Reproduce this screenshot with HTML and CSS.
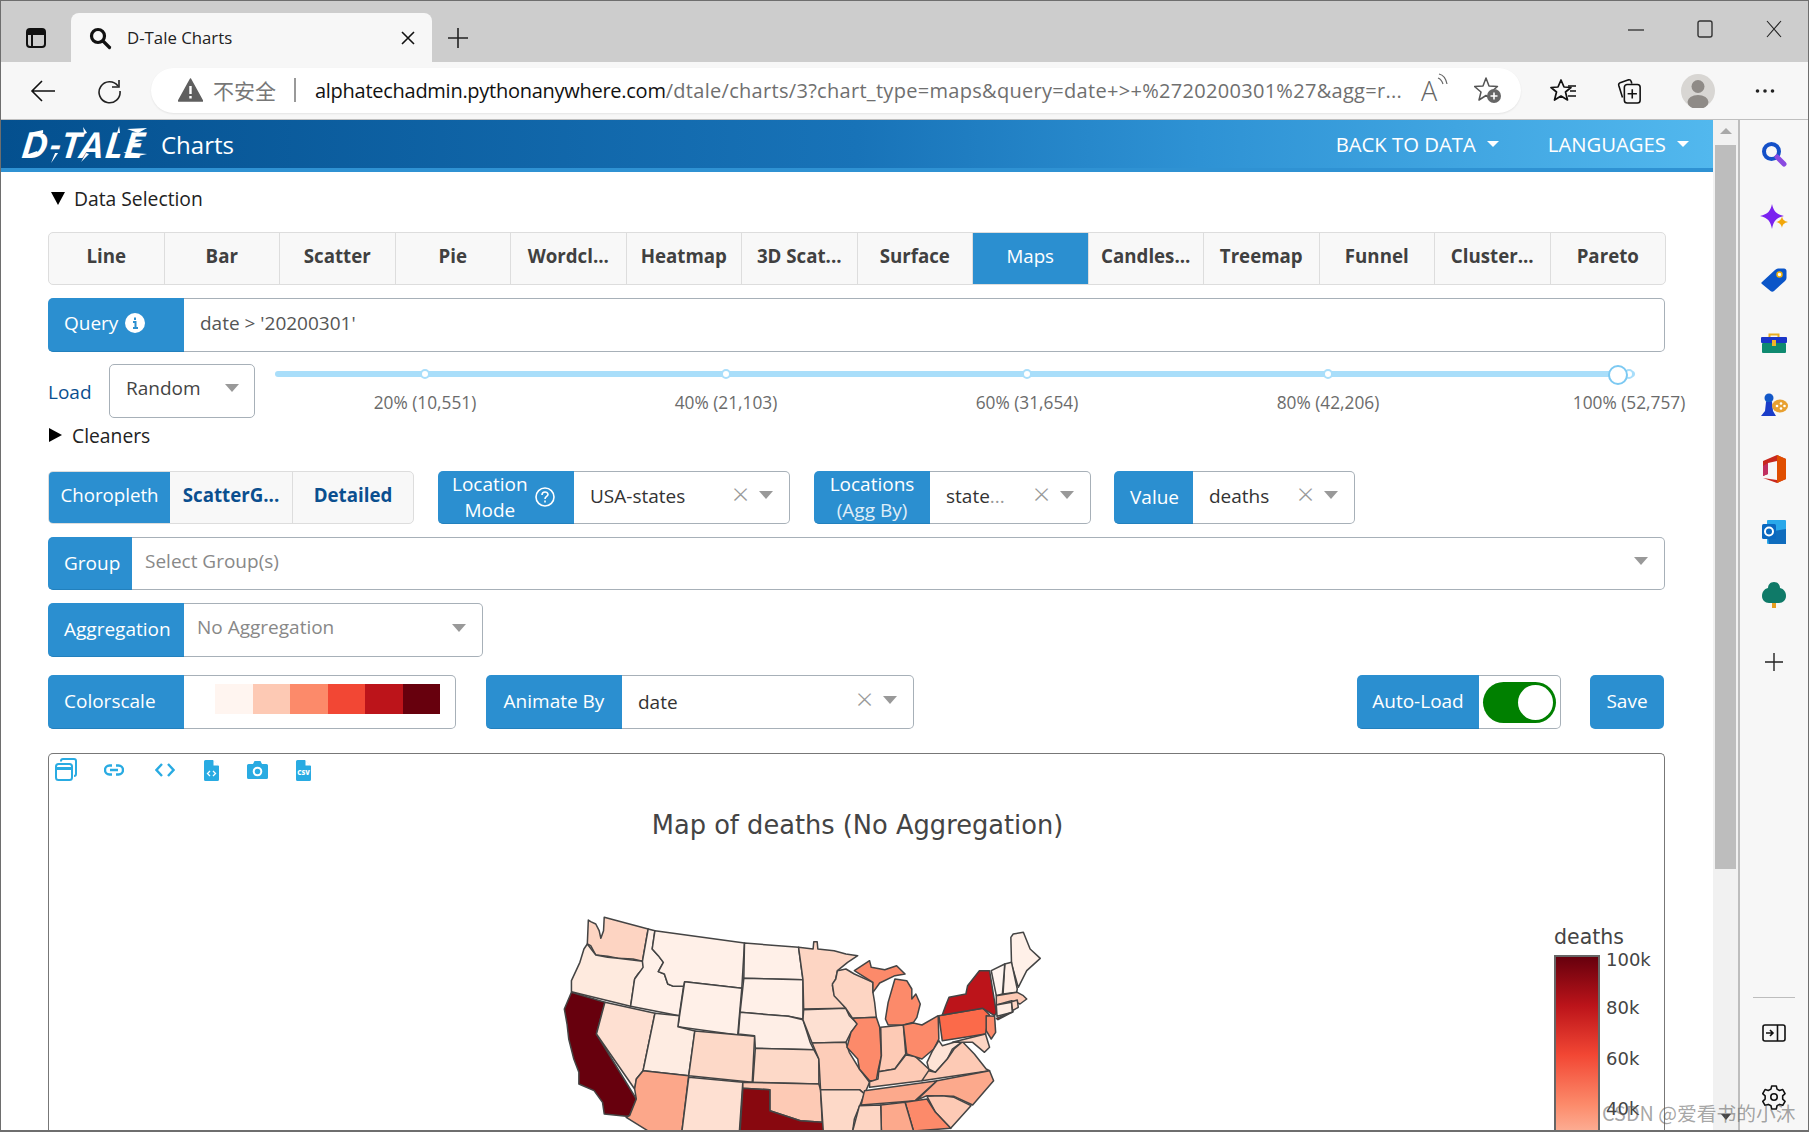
FILE: index.html
```html
<!DOCTYPE html>
<html lang="en">
<head>
<meta charset="utf-8">
<title>D-Tale Charts</title>
<link rel="stylesheet" href="styles.css">
</head>
<body>
<div class="window">
  <div class="tabstrip">
    <div class="strip-btn">
      <svg width="24" height="24" viewBox="0 0 24 24" fill="none" stroke="#111" stroke-width="2"><rect x="3" y="3" width="18" height="18" rx="3"/><path d="M3 8h18M8 8v13" /><path d="M3 5.500h18" stroke-width="4"/></svg>
    </div>
    <div class="tab">
      <svg class="tab-ico" width="24" height="24" viewBox="0 0 24 24" fill="none" stroke="#111" stroke-width="3.200"><circle cx="10" cy="10" r="6.500"/><path d="M15 15l6.500 6.500" stroke-linecap="round"/></svg>
      <span class="tab-title">D-Tale Charts</span>
      <svg class="tab-x" width="14" height="14" viewBox="0 0 14 14" stroke="#111" stroke-width="1.600"><path d="M1 1l12 12M13 1L1 13"/></svg>
    </div>
    <div class="plus-btn">
      <svg width="22" height="22" viewBox="0 0 22 22" stroke="#222" stroke-width="1.600"><path d="M11 1v20M1 11h20"/></svg>
    </div>
    <div class="win-ctrls">
      <div class="win-btn"><svg width="16" height="16" viewBox="0 0 16 16" stroke="#222" stroke-width="1.200"><path d="M0 9h16"/></svg></div>
      <div class="win-btn"><svg width="16" height="18" viewBox="0 0 16 18" fill="none" stroke="#333" stroke-width="1.400"><rect x="1" y="1" width="14" height="16" rx="2"/></svg></div>
      <div class="win-btn"><svg width="16" height="18" viewBox="0 0 16 18" stroke="#222" stroke-width="1.100"><path d="M1 1l14 16M15 1L1 17"/></svg></div>
    </div>
  </div>

  <div class="toolbar">
    <div class="tool-btn first">
      <svg width="26" height="24" viewBox="0 0 26 24" fill="none" stroke="#111" stroke-width="1.600"><path d="M25 12H2M12 2L2 12l10 10"/></svg>
    </div>
    <div class="tool-btn">
      <svg width="26" height="26" viewBox="0 0 26 26" fill="none" stroke="#222" stroke-width="1.600"><path d="M22 8a10.500 10.500 0 1 0 2 5"/><path d="M23 2v7h-7"/></svg>
    </div>
    <div class="addr">
      <svg class="warn" width="25" height="24" viewBox="0 0 25 24"><path d="M12.500 1L24.500 23H.5z" fill="#5f5f5f" stroke="#5f5f5f" stroke-linejoin="round" stroke-width="1.500"/><path d="M12.500 8v8M12.500 18v2.500" stroke="#fff" stroke-width="2.400"/></svg>
      <span class="unsafe">不安全</span>
      <span class="addr-sep"></span>
      <span class="url"><b>alphatechadmin.pythonanywhere.com</b>/dtale/charts/3?chart_type=maps&amp;query=date+&gt;+%2720200301%27&amp;agg=r...</span>
      <span class="read">A<svg width="12" height="18" viewBox="0 0 12 18" fill="none" stroke="#666" stroke-width="1.200"><path d="M2 2c5 1 7 5 8 10M1 6c3 1 4 3 5 6"/></svg></span>
      <svg class="star-add" width="28" height="28" viewBox="0 0 28 28"><path d="M12 2l3 8 8.500.5-6.500 5.500 2 8-7-4.500-7 4.500 2-8L.5 10.500 9 10z" fill="none" stroke="#555" stroke-width="1.500" stroke-linejoin="round"/><circle cx="20" cy="20" r="7" fill="#666"/><path d="M20 16.500v7M16.500 20h7" stroke="#fff" stroke-width="1.600"/></svg>
    </div>
    <div class="tool-btn right">
      <svg width="28" height="26" viewBox="0 0 28 26" fill="none" stroke="#111" stroke-width="1.700" stroke-linejoin="round"><path d="M11 2l3 7 7 .5-5.500 4.500 2 8L11 18l-6.500 4 2-8L1 9.500 8 9z"/><path d="M18 8h8M20 13h6M18 18h8"/></svg>
    </div>
    <div class="tool-btn right coll">
      <svg width="26" height="28" viewBox="0 0 28 30" fill="none" stroke="#111" stroke-width="1.700"><path d="M7 22L3 9c-.4-1.500.3-2.500 1.500-3l9-3c1.500-.3 2.500.5 3 2l.5 2"/><rect x="9" y="8" width="17" height="20" rx="3"/><path d="M17.500 13v10M12.500 18h10"/></svg>
    </div>
    <div class="tool-btn right">
      <svg width="34" height="34" viewBox="0 0 34 34"><circle cx="17" cy="17" r="17" fill="#d8d6d3"/><circle cx="17" cy="12.500" r="6.500" fill="#8f8b87"/><ellipse cx="17" cy="28" rx="10.500" ry="7" fill="#8f8b87"/></svg>
    </div>
    <div class="tool-btn right">
      <svg width="20" height="6" viewBox="0 0 20 6" fill="#222"><circle cx="2.500" cy="3" r="1.800"/><circle cx="10" cy="3" r="1.800"/><circle cx="17.500" cy="3" r="1.800"/></svg>
    </div>
  </div>

  <div class="main">
    <div class="page">
      <nav class="navbar">
        <span class="logo">D-TALE
          <svg class="logo-brush" width="130" height="38" viewBox="0 0 130 38" fill="#fff"><path d="M0 31l14-5 2 4-9 2zM6 8l14-3v3l-9 1zM28 38l4-10 3 0zM58 37l5-9 3 1zM60 2l4 6-3 1zM96 1l-2 7 3 0zM100 27l24 2-14 3zM104 4l20-1-9 5zM106 14l14 1-9 3z"/></svg>
        </span>
        <span class="brand">Charts</span>
        <span class="nav-link first-link">BACK TO DATA<i class="caret-w"></i></span>
        <span class="nav-link">LANGUAGES<i class="caret-w"></i></span>
      </nav>
      <div class="content">
        <div class="disclosure ds"><i class="tri-down"></i>Data Selection</div>

        <div class="chart-tabs">
          <div class="ctab">Line</div><div class="ctab">Bar</div><div class="ctab">Scatter</div><div class="ctab">Pie</div><div class="ctab">Wordcl...</div><div class="ctab">Heatmap</div><div class="ctab">3D Scat...</div><div class="ctab">Surface</div><div class="ctab active">Maps</div><div class="ctab">Candles...</div><div class="ctab">Treemap</div><div class="ctab">Funnel</div><div class="ctab">Cluster...</div><div class="ctab">Pareto</div>
        </div>

        <div class="group query-row">
          <div class="label w136">Query
            <svg class="info" width="20" height="20" viewBox="0 0 20 20"><circle cx="10" cy="10" r="10" fill="#fff"/><path d="M10 4.500v2.500M8 9h2.500v6M8 15h5" stroke="#2b8fd0" stroke-width="2" fill="none"/></svg>
          </div>
          <div class="field query-text">date &gt; '20200301'</div>
        </div>

        <div class="load-row">
          <div class="load-label">Load</div>
          <div class="load-select"><span>Random</span><i class="caret"></i></div>
          <div class="slider">
            <div class="track"></div>
            <i class="dot d1"></i><i class="dot d2"></i><i class="dot d3"></i><i class="dot d4"></i><i class="dot d5"></i>
            <i class="handle"></i>
            <span class="mark d1">20% (10,551)</span>
            <span class="mark d2">40% (21,103)</span>
            <span class="mark d3">60% (31,654)</span>
            <span class="mark d4">80% (42,206)</span>
            <span class="mark d5">100% (52,757)</span>
          </div>
        </div>

        <div class="disclosure cl"><i class="tri-right"></i>Cleaners</div>

        <div class="opts-row">
          <div class="btn-group">
            <div class="seg on">Choropleth</div>
            <div class="seg">ScatterG...</div>
            <div class="seg last">Detailed</div>
          </div>
          <div class="group lm">
            <div class="label w136 two-line"><span class="two">Location<br>Mode</span>
              <svg class="help" width="20" height="20" viewBox="0 0 20 20" fill="none" stroke="#fff" stroke-width="1.600"><circle cx="10" cy="10" r="9"/><path d="M7 8c0-4 6-4 6-.5 0 2-3 2-3 4.500M10 13.500v2"/></svg>
            </div>
            <div class="field sel"><span class="val">USA-states</span><span class="x">×</span><i class="caret"></i></div>
          </div>
          <div class="group loc">
            <div class="label w116 center"><span class="two">Locations<br><span class="sub">(Agg By)</span></span></div>
            <div class="field sel"><span class="val">state<span class="fade">...</span></span><span class="x">×</span><i class="caret"></i></div>
          </div>
          <div class="group val-g">
            <div class="label w79">Value</div>
            <div class="field sel"><span class="val">deaths</span><span class="x">×</span><i class="caret"></i></div>
          </div>
        </div>

        <div class="group group-row">
          <div class="label w84">Group</div>
          <div class="field sel"><span class="val ph">Select Group(s)</span><i class="caret"></i></div>
        </div>

        <div class="group agg-row">
          <div class="label w136">Aggregation</div>
          <div class="field sel"><span class="val ph">No Aggregation</span><i class="caret"></i></div>
        </div>

        <div class="color-row">
          <div class="group cs">
            <div class="label w136">Colorscale</div>
            <div class="field swatches">
              <i class="sw s1"></i><i class="sw s2"></i><i class="sw s3"></i><i class="sw s4"></i><i class="sw s5"></i><i class="sw s6"></i>
            </div>
          </div>
          <div class="group anim">
            <div class="label w136 center">Animate By</div>
            <div class="field sel"><span class="val">date</span><span class="x">×</span><i class="caret"></i></div>
          </div>
          <div class="group auto">
            <div class="label w122 center">Auto-Load</div>
            <div class="field toggle-wrap"><div class="toggle"><i></i></div></div>
          </div>
          <div class="save">Save</div>
        </div>

        <div class="chart">
          <div class="chart-tools">
            <svg class="ct" width="22" height="24" viewBox="0 0 22 24" fill="none" stroke="#29abe2" stroke-width="2"><path d="M6 3.500V3a2 2 0 0 1 2-2h11a2 2 0 0 1 2 2v13a2 2 0 0 1-2 2"/><rect x="1" y="6" width="16" height="16" rx="2.500"/><path d="M1 10.500h16" stroke-width="3"/></svg>
            <svg class="ct" width="20" height="12" viewBox="0 0 20 12" fill="none" stroke="#29abe2" stroke-width="2.400"><path d="M8 1.500H5.500a4.500 4.500 0 0 0 0 9H8M12 1.500h2.500a4.500 4.500 0 0 1 0 9H12M6 6h8"/></svg>
            <svg class="ct ct-code" width="20" height="14" viewBox="0 0 20 14" fill="none" stroke="#29abe2" stroke-width="2.400"><path d="M7 1L1.500 7 7 13M13 1l5.500 6L13 13"/></svg>
            <svg class="ct ct-file" width="15" height="21" viewBox="0 0 15 21"><path d="M1.500 0H9l6 6v13.500a1.500 1.500 0 0 1-1.500 1.500h-12A1.500 1.500 0 0 1 0 19.500v-18A1.500 1.500 0 0 1 1.500 0z" fill="#29abe2"/><path d="M9.500 0L15 5.500H9.500z" fill="#fff"/><path d="M6 11l-2.500 2.500L6 16M9 11l2.500 2.500L9 16" fill="none" stroke="#fff" stroke-width="1.300"/></svg>
            <svg class="ct ct-next" width="21" height="18" viewBox="0 0 21 18"><path d="M6 3l1.500-3h6L15 3h4.500A1.500 1.500 0 0 1 21 4.500v12a1.500 1.500 0 0 1-1.500 1.500h-18A1.500 1.500 0 0 1 0 16.500v-12A1.500 1.500 0 0 1 1.500 3z" fill="#29abe2"/><circle cx="10.500" cy="10.500" r="3.800" fill="none" stroke="#fff" stroke-width="2"/></svg>
            <svg class="ct ct-next" width="15" height="21" viewBox="0 0 15 21"><path d="M1.500 0H9l6 6v13.500a1.500 1.500 0 0 1-1.500 1.500h-12A1.500 1.500 0 0 1 0 19.500v-18A1.500 1.500 0 0 1 1.500 0z" fill="#29abe2"/><path d="M9.500 0L15 5.500H9.500z" fill="#fff"/><text x="7.500" y="15" class="csv">CSV</text></svg>
          </div>
          <div class="chart-title">Map of deaths (No Aggregation)</div>

          <svg class="map" width="530" height="232" viewBox="0 0 1568 696" preserveAspectRatio="none" stroke="#444" stroke-width="4.500" stroke-linejoin="round">
            <polygon fill="#fdd4c2" points="143,63 150,68 165,75 175,95 180,118 188,95 190,55 320,90 303,187 275,180 230,178 200,172 165,168 150,140 140,135"/>
            <polygon fill="#feeade" points="140,135 165,168 200,175 230,178 303,187 308,205 290,225 280,240 268,322 93,278 93,245 118,190 130,150"/>
            <polygon fill="#67000d" points="93,280 192,310 167,405 285,600 265,650 255,652 190,645 185,610 160,575 115,555 115,520 100,480 85,420 80,375 72,330"/>
            <polygon fill="#fee0d2" points="192,310 340,343 305,515 285,540 280,570 167,405"/>
            <polygon fill="#fff0e8" points="320,90 340,95 332,150 350,170 365,190 350,218 368,225 378,255 395,262 425,260 412,350 268,322 280,240 305,205 303,187"/>
            <polygon fill="#fff0e8" points="340,95 605,132 597,268 428,248 425,262 395,262 378,255 368,225 350,218 365,190 350,170 332,150"/>
            <polygon fill="#fff0e8" points="428,248 597,268 585,408 408,383"/>
            <polygon fill="#feece2" points="340,343 412,350 408,383 458,396 440,530 305,515"/>
            <polygon fill="#fdd9c8" points="458,396 635,412 628,550 440,530"/>
            <polygon fill="#fca78a" points="305,515 440,530 420,696 320,696 255,655 265,650 285,600 280,570 285,540"/>
            <polygon fill="#fee0d2" points="440,535 600,550 590,696 420,696"/>
            <polygon fill="#fff0e8" points="605,132 765,145 778,242 603,238"/>
            <polygon fill="#fff0e8" points="603,238 778,242 778,360 735,352 592,340"/>
            <polygon fill="#feeee6" points="592,340 735,352 778,362 800,432 810,452 637,448 635,410 587,405"/>
            <polygon fill="#fdd9c8" points="637,448 810,452 825,480 825,555 630,550"/>
            <polygon fill="#fdcab5" points="600,550 825,555 830,572 835,670 770,665 680,635 680,572 600,568"/>
            <polygon fill="#88080f" points="600,568 680,572 680,635 770,665 835,670 848,696 592,696"/>
            <polygon fill="#fdd5c3" points="765,145 808,150 810,128 820,128 822,150 870,155 905,165 940,170 910,190 880,215 875,240 865,260 870,285 905,328 780,330 778,242"/>
            <polygon fill="#fde0d2" points="780,332 905,328 915,350 940,375 920,400 905,430 805,432 778,362"/>
            <polygon fill="#fdcdb9" points="805,432 905,430 915,460 945,510 975,550 960,585 945,572 830,572 825,480"/>
            <polygon fill="#fdd9c8" points="830,572 945,572 960,585 930,660 925,696 838,696"/>
            <polygon fill="#fdd5c3" points="880,215 905,210 930,225 985,250 985,280 990,310 995,355 925,358 905,328 870,290 865,255 875,240"/>
            <polygon fill="#fc8a6a" points="925,358 995,355 1005,385 1010,470 1000,515 995,545 975,545 945,510 940,480 908,445 920,400 938,375"/>
            <polygon fill="#fdcab5" points="1008,385 1075,378 1082,465 1050,510 1002,518 1010,470"/>
            <polygon fill="#fc8a6a" points="930,215 975,185 980,205 1020,212 1055,200 1080,225 1050,230 1005,252 985,280 985,250"/>
            <polygon fill="#fc8a6a" points="1030,378 1022,360 1030,310 1050,240 1085,245 1100,270 1100,300 1112,285 1125,315 1115,355 1105,370 1075,378"/>
            <polygon fill="#fdcab5" points="1002,518 1050,510 1082,468 1110,472 1150,510 1165,520 1130,545 975,565 975,548 1000,540"/>
            <polygon fill="#fc8a6a" points="1075,378 1105,372 1130,378 1178,350 1180,420 1165,450 1130,480 1085,465"/>
            <polygon fill="#fca98c" points="1175,545 960,575 950,618 1110,605"/>
            <polygon fill="#fee3d6" points="1145,490 1160,458 1180,425 1190,440 1225,430 1250,428 1220,450 1205,480 1170,520 1150,510"/>
            <polygon fill="#fdcab5" points="1130,545 1150,515 1170,520 1205,480 1225,450 1250,428 1285,465 1320,510 1330,515"/>
            <polygon fill="#fca98c" points="1175,545 1330,515 1342,545 1280,618 1225,592 1145,590 1115,603"/>
            <polygon fill="#fdcab5" points="1145,592 1190,590 1225,595 1275,620 1215,688 1170,640"/>
            <polygon fill="#fc8a6a" points="1080,610 1145,600 1170,640 1215,688 1105,696"/>
            <polygon fill="#fca98c" points="1008,618 1080,610 1105,696 1010,696"/>
            <polygon fill="#fdd5c3" points="945,620 1008,618 1010,696 925,696"/>
            <polygon fill="#fb6a4a" points="1180,350 1310,328 1330,348 1318,405 1190,425"/>
            <polygon fill="#bc141a" points="1200,320 1210,295 1260,285 1265,260 1300,215 1330,215 1350,340 1345,350 1310,328 1190,348"/>
            <polygon fill="#fc8a6a" points="1320,350 1345,352 1348,400 1335,420 1320,395"/>
            <polygon fill="#fdd5c3" points="1220,430 1318,405 1330,445 1315,460 1280,430"/>
            <polygon fill="#fff0e8" points="1393,115 1400,105 1430,100 1450,150 1480,178 1440,215 1415,265 1395,195"/>
            <polygon fill="#fff0e8" points="1375,195 1395,190 1412,270 1410,280 1370,285"/>
            <polygon fill="#fff5f0" points="1335,215 1375,195 1368,285 1350,290"/>
            <polygon fill="#fdcab5" points="1350,290 1412,280 1430,290 1440,300 1420,315 1395,305 1350,318"/>
            <polygon fill="#feece2" points="1350,318 1395,310 1398,340 1352,352"/>
            <polygon fill="#fdd5c3" points="1395,308 1412,303 1415,325 1398,335"/>
            <polygon fill="#bc141a" points="1350,358 1400,338 1355,362"/>
          </svg>

          <div class="legend-title">deaths</div>
          <div class="colorbar"></div>
          <span class="tick t1">100k</span>
          <span class="tick t2">80k</span>
          <span class="tick t3">60k</span>
          <span class="tick t4">40k</span>
        </div>
      </div>
    </div>

    <div class="scrollbar">
      <i class="sb-up"></i>
      <div class="sb-thumb"></div>
      <i class="sb-down"></i>
    </div>

    <aside class="sidebar">
      <div class="side-item"><svg width="26" height="26" viewBox="0 0 26 26" fill="none"><circle cx="10.500" cy="10.500" r="7.500" stroke="#1450c8" stroke-width="4"/><path d="M16 16l7 7" stroke="#8a4ae0" stroke-width="5" stroke-linecap="round"/></svg></div>
      <div class="side-item"><svg width="28" height="26" viewBox="0 0 28 26"><path d="M12 0c1.500 7 4 10 12 12-8 2-10.500 5-12 13-1.500-8-4-11-12-13 8-2 10.500-5 12-12z" fill="#7a22f0"/><path d="M22 12c.5 3.500 2 5 6 6-4 1-5.500 2.500-6 6-.5-3.500-2-5-6-6 4-1 5.500-2.500 6-6z" fill="#f2a70a"/></svg></div>
      <div class="side-item"><svg width="26" height="24" viewBox="0 0 26 24"><path d="M1 14L14 2c1-1 2-1.500 3-1.500h6c1.500 0 2.500 1 2.500 2.500v7c0 1-.5 2-1.500 3L13 23c-1 1-2.500 1-3.500 0L1 16c-1-.7-.8-1.300 0-2z" fill="#0b55c8"/><circle cx="18.500" cy="6.500" r="2.500" fill="#fff" stroke="#f2b30a" stroke-width="1.500"/></svg></div>
      <div class="side-item"><svg width="26" height="22" viewBox="0 0 26 22"><path d="M8.500 6V2.500h9V6" fill="none" stroke="#e8ac20" stroke-width="2"/><rect x="0" y="5" width="26" height="6" rx="1" fill="#1a35c8"/><rect x="1" y="11" width="24" height="10" rx="1" fill="#0f8a70"/><rect x="11" y="8" width="4" height="6" fill="#f0b428"/></svg></div>
      <div class="side-item"><svg width="28" height="26" viewBox="0 0 28 26"><circle cx="9" cy="5" r="4.500" fill="#1358c8"/><path d="M6 9h6l1 9 3 5H1l4-5z" fill="#1a3cc8"/><ellipse cx="20" cy="13" rx="8" ry="6.500" fill="#e8a030"/><circle cx="17" cy="13" r="1.300" fill="#fff"/><circle cx="21" cy="10.500" r="1.300" fill="#fff"/><circle cx="21" cy="15.500" r="1.300" fill="#fff"/><circle cx="24.500" cy="13" r="1.300" fill="#fff"/></svg></div>
      <div class="side-item"><svg width="24" height="28" viewBox="0 0 24 28"><path d="M1 6l14-6 9 4v20l-9 4-14-5 14 2V6L6 8v11l-5 2z" fill="#c8281e"/><path d="M15 0l9 4v20l-9 4z" fill="#e04e00"/><path d="M1 11v10l5-2V8z" fill="#c03060"/></svg></div>
      <div class="side-item"><svg width="24" height="24" viewBox="0 0 24 24"><rect x="5" y="0" width="19" height="24" rx="1" fill="#29a8ea"/><path d="M5 12l19-3v15H7z" fill="#0f6cbd"/><rect x="0" y="4" width="14" height="15" rx="1.500" fill="#0a68c0"/><circle cx="7" cy="11.500" r="4" fill="none" stroke="#fff" stroke-width="2"/></svg></div>
      <div class="side-item"><svg width="24" height="26" viewBox="0 0 24 26"><rect x="10" y="18" width="4" height="8" fill="#e8a020"/><path d="M12 0c4 0 6 3 6 6 4 1 6 4 6 8 0 4-3 7-7 7H7c-4 0-7-3-7-7 0-4 2-7 6-8 0-3 2-6 6-6z" fill="#0f7a68"/></svg></div>
      <div class="side-item plus"><svg width="20" height="20" viewBox="0 0 20 20" stroke="#222" stroke-width="1.400"><path d="M10 1v18M1 10h18"/></svg></div>
      <div class="side-foot">
        <div class="side-div"></div>
        <div class="side-item big"><svg width="24" height="18" viewBox="0 0 24 18" fill="none" stroke="#111" stroke-width="1.600"><rect x="1" y="1" width="22" height="16" rx="2"/><path d="M15.500 1v16M4 9h7M8 6l3 3-3 3"/></svg></div>
        <div class="side-item big"><svg width="24" height="26" viewBox="-1 0 26 26" fill="none" stroke="#111" stroke-width="1.700" stroke-linejoin="round"><circle cx="12" cy="13" r="3.500"/><path d="M9.500 1h5l.8 3.500 2.700 1.500 3.500-1 2.500 4.300-2.600 2.400v3.600l2.600 2.400-2.500 4.300-3.500-1-2.700 1.500-.8 3.500h-5l-.8-3.500L5.800 21l-3.500 1L-.2 17.700l2.600-2.400v-3.600L-.2 9.300 2.300 5l3.500 1 2.900-1.500z"/></svg></div>
      </div>
    </aside>
  </div>

  <div class="watermark">CSDN @爱看书的小沐</div>
</div>
</body>
</html>
```

FILE: styles.css
```css
* { box-sizing: border-box; }
html, body { margin: 0; padding: 0; height: 100%; overflow: hidden; background: #fff; }
body { font-family: "Open Sans", "Noto Sans CJK SC", sans-serif; color: #333; }
i { display: block; }

.window { position: relative; width: 1809px; height: 1132px; border: 1px solid #6e6e6e; border-bottom-width: 2px; display: flex; flex-direction: column; overflow: hidden; }

/* browser chrome */
.tabstrip { height: 61px; flex: none; background: #cdcdcd; display: flex; align-items: flex-end; }
.strip-btn { width: 70px; height: 49px; display: flex; align-items: center; justify-content: center; }
.tab { width: 361px; height: 49px; background: #f7f7f7; border-radius: 8px 8px 0 0; display: flex; align-items: center; padding: 0 17px 0 17px; }
.tab-title { margin-left: 15px; font-size: 16.800px; color: #222; flex: 1; padding-bottom: 1px; }
.plus-btn { width: 52px; height: 49px; display: flex; align-items: center; justify-content: center; }
.win-ctrls { margin-left: auto; display: flex; height: 61px; align-items: center; padding-bottom: 5px; }
.win-btn { width: 69px; display: flex; align-items: center; justify-content: center; }

.toolbar { height: 58px; flex: none; background: #f7f7f7; border-bottom: 1px solid #bfbfbf; display: flex; align-items: center; padding-left: 9px; }
.tool-btn { width: 66px; height: 46px; display: flex; align-items: center; justify-content: center; }
.tool-btn.right { width: 67px; }
.coll { padding-right: 4px; }
.addr { margin-left: 9px; margin-bottom: 1px; width: 1370px; height: 45px; flex: none; background: #fff; border-radius: 23px; display: flex; align-items: center; padding-left: 27px; margin-right: 9px; box-shadow: 0 1px 2px rgba(0,0,0,.08); }
.unsafe { margin-left: 10px; font-size: 21px; color: #777; width: 65px; white-space: nowrap; font-family: "Noto Sans CJK SC", sans-serif; }
.addr-sep { width: 2px; height: 24px; background: #999; margin-left: 16px; }
.url { margin-left: 19px; width: 1088px; white-space: nowrap; overflow: hidden; font-size: 20px; letter-spacing: .3px; color: #6f6f6f; flex: none; }
.url b { font-weight: 400; color: #111; letter-spacing: -.27px; }
.read { margin-left: 18px; font-size: 27px; color: #666; display: flex; align-items: flex-start; width: 34px; font-weight: 300; }
.star-add { margin-left: 19px; }

/* page */
.main { flex: 1; display: flex; min-height: 0; }
.page { width: 1712px; flex: none; display: flex; flex-direction: column; min-height: 0; }
.navbar { height: 52px; flex: none; border-bottom: 4px solid #2f92d3; background: linear-gradient(90deg, #04508f 0%, #1873b8 50%, #2e92d4 70%, #52b8ee 100%); display: flex; align-items: center; color: #fff; padding-left: 22px; }
.logo { position: relative; font-family: "Lato", sans-serif; font-weight: 900; font-style: italic; font-size: 35px; letter-spacing: 2px; width: 138px; line-height: 1; white-space: nowrap; transform: skewX(-10deg); }
.logo-brush { position: absolute; left: 0; top: -2px; transform: skewX(10deg); }
.brand { font-size: 24px; }
.nav-link { font-size: 20.300px; display: flex; align-items: center; }
.first-link { margin-left: auto; }
.nav-link + .nav-link { margin-left: 49px; margin-right: 24px; }
.caret-w { width: 0; height: 0; margin-left: 11px; border: 6px solid transparent; border-top-color: #fff; border-bottom-width: 0; }

.content { flex: 1; padding-left: 47px; min-height: 0; display: flex; flex-direction: column; color: #404040; font-size: 19px; }
.disclosure { display: flex; align-items: center; color: #222; font-size: 19.300px; height: 26px; }
.ds { margin-top: 13px; }
.tri-down { width: 0; height: 0; border: 7px solid transparent; border-top: 13px solid #000; border-bottom: 0; margin: 0 9px 0 3px; }
.tri-right { width: 0; height: 0; border: 7px solid transparent; border-left: 13px solid #000; border-right: 0; margin-right: 10px; margin-left: 1px; }

.chart-tabs { width: 1618px; height: 53px; margin-top: 21px; display: flex; background: #f8f8f8; border: 1px solid #ddd; border-radius: 5px; }
.ctab { flex: 1; display: flex; align-items: center; justify-content: center; font-weight: 700; font-size: 18.700px; color: #404040; border-right: 1px solid #ddd; white-space: nowrap; padding-bottom: 7px; }
.ctab:last-child { border-right: 0; }
.ctab.active { background: #2b8fd0; color: #fff; font-weight: 400; }

.group { display: flex; height: 53px; }
.label { background: #2b8fd0; color: #fff; border-radius: 5px 0 0 5px; display: flex; align-items: center; padding-left: 16px; font-size: 19px; flex: none; border-bottom: 1px solid #2280bd; }
.label.center { justify-content: center; padding-left: 0; }
.w136 { width: 136px; }
.w116 { width: 116px; }
.w79 { width: 79px; }
.w84 { width: 84px; }
.w122 { width: 122px; }
.field { flex: 1; border: 1px solid #a7b0b8; border-left: 0; border-radius: 0 5px 5px 0; background: #fff; display: flex; align-items: center; min-width: 0; }
.query-row { width: 1617px; margin-top: 13px; height: 54px; }
.query-row .label { padding-bottom: 3px; }
.query-text { padding-left: 16px; padding-bottom: 4px; color: #555; }
.info { margin-left: 7px; }

.load-row { display: flex; margin-top: 12px; height: 54px; }
.load-label { width: 61px; color: #0b4f8f; display: flex; align-items: flex-end; padding-bottom: 13px; }
.load-select { width: 146px; height: 54px; border: 1px solid #a7b0b8; border-radius: 5px; display: flex; align-items: center; padding: 0 15px 6px 16px; justify-content: space-between; color: #444; }
.caret { width: 0; height: 0; border: 7px solid transparent; border-top: 8px solid #999; border-bottom: 0; flex: none; }
.slider { position: relative; width: 1360px; margin-left: 20px; }
.track { height: 6px; margin-top: 7px; background: #a9defa; border-radius: 3px; }
.dot { position: absolute; top: 5px; width: 10px; height: 10px; margin-left: -5px; border-radius: 50%; background: #fff; border: 2px solid #a9defa; }
.handle { position: absolute; top: 1px; left: 1343px; width: 20px; height: 20px; margin-left: -10px; border-radius: 50%; background: #fff; border: 2px solid #7cc9f2; }
.mark { position: absolute; top: 27px; transform: translateX(-50%); white-space: nowrap; font-size: 17.300px; color: #6b6b6b; }
.d1 { left: 150px; }
.d2 { left: 451px; }
.d3 { left: 752px; }
.d4 { left: 1053px; }
.d5 { left: 1354px; }

.cl { margin-top: 4px; }
.opts-row { display: flex; margin-top: 23px; height: 53px; }
.opts-row .group { height: 53px; }
.btn-group { width: 366px; display: flex; border: 1px solid #ddd; border-radius: 5px; background: #f8f8f8; overflow: hidden; }
.seg { display: flex; align-items: center; justify-content: center; font-weight: 700; color: #0b4f8f; width: 123px; padding-bottom: 7px; border-right: 1px solid #ddd; white-space: nowrap; font-size: 18.700px; }
.seg.on { background: #2b8fd0; color: #fff; font-weight: 400; border-right: 0; width: 121px; }
.seg.last { border-right: 0; flex: 1; }
.lm { width: 352px; margin-left: 24px; }
.loc { width: 277px; margin-left: 24px; }
.val-g { width: 241px; margin-left: 23px; }
.two { text-align: center; line-height: 26px; display: block; }
.sub { opacity: .85; }
.two-line { padding-left: 14px; }
.help { margin-left: 7px; }
.sel { padding: 0 16px 0 16px; }
.val { flex: 1; color: #333; white-space: nowrap; }
.fade { color: #999; }
.ph { color: #888; }
.x { font-size: 30px; color: #999; margin-right: 10px; font-weight: 300; line-height: 1; padding-bottom: 7px; }
.sel .caret { margin-bottom: 5px; }
.opts-row .val { padding-bottom: 3px; }

.group-row { width: 1617px; margin-top: 13px; }
.group-row .val, .agg-row .val { padding-bottom: 6px; margin-left: -3px; }
.agg-row { width: 435px; margin-top: 13px; height: 54px; }
.agg-row .label { padding-bottom: 1px; }

.color-row { display: flex; width: 1617px; margin-top: 18px; height: 54px; }
.color-row .group { height: 54px; }
.color-row .label { padding-bottom: 2px; }
.cs { width: 408px; }
.swatches { padding-left: 31px; padding-bottom: 6px; }
.sw { width: 37.500px; height: 30px; flex: none; }
.s1 { background: #fff5f0; }
.s2 { background: #fdc9b4; }
.s3 { background: #fc8a6a; }
.s4 { background: #f24734; }
.s5 { background: #bc141a; }
.s6 { background: #67000d; }
.anim { width: 428px; margin-left: 30px; }
.auto { width: 204px; margin-left: auto; }
.toggle-wrap { padding-left: 4px; }
.toggle { width: 73px; height: 41px; border-radius: 21px; background: #008000; position: relative; }
.toggle i { position: absolute; right: 3px; top: 3px; width: 35px; height: 35px; border-radius: 50%; background: #fff; }
.save { width: 74px; margin-left: 29px; margin-right: 1px; background: #2b8fd0; color: #fff; border-radius: 5px; display: flex; align-items: center; justify-content: center; padding-bottom: 2px; }

.chart { position: relative; width: 1617px; flex: 1; margin-top: 24px; border: 1px solid #777; border-bottom: 0; border-radius: 5px 5px 0 0; overflow: hidden; }
.chart-tools { display: flex; align-items: center; gap: 27px; padding: 2px 0 0 6px; height: 30px; }
.ct { flex: none; }
.ct-code { margin-left: 4px; }
.ct-file { margin-left: 2px; }
.ct-next { margin-left: 1px; }
.csv { font-family: "Open Sans", sans-serif; font-size: 6.500px; font-weight: 800; fill: #fff; text-anchor: middle; }
.chart-title { text-align: center; font-family: "DejaVu Sans", sans-serif; font-size: 25.700px; color: #444; margin-top: 26px; margin-left: 2px; }
.map { position: absolute; left: 491px; top: 145px; }
.legend-title { position: absolute; left: 1505px; top: 171px; font-family: "DejaVu Sans", sans-serif; font-size: 20.500px; color: #444; }
.colorbar { position: absolute; left: 1505px; top: 201px; width: 46px; height: 200px; border: 2px solid #666; background: linear-gradient(180deg, #67000d 0%, #bc141a 25%, #f24734 50%, #fc8a6a 75%, #fdc9b4 100%); }
.tick { position: absolute; left: 1557px; font-family: "DejaVu Sans", sans-serif; font-size: 18px; color: #444; }
.t1 { top: 195px; }
.t2 { top: 243px; }
.t3 { top: 294px; }
.t4 { top: 344px; }

/* scrollbar */
.scrollbar { width: 25px; flex: none; background: #f1f1f1; display: flex; flex-direction: column; align-items: center; }
.sb-up { width: 0; height: 0; margin: 8px 0 11px; border: 6px solid transparent; border-bottom: 6px solid #a8a8a8; border-top: 0; }
.sb-thumb { width: 21px; height: 724px; background: #bdbdbd; }
.sb-down { width: 0; height: 0; margin-top: auto; margin-bottom: 10px; border: 5px solid transparent; border-top: 6px solid #444; border-bottom: 0; }

/* sidebar */
.sidebar { flex: 1; background: #f7f7f7; border-left: 2px solid #bdbdbd; display: flex; flex-direction: column; align-items: center; padding-top: 2px; }
.side-item { height: 63px; width: 100%; flex: none; display: flex; align-items: center; justify-content: center; }
.side-item.plus { height: 67px; padding-top: 4px; }
.side-foot { margin-top: auto; width: 100%; display: flex; flex-direction: column; align-items: center; margin-bottom: 1px; }
.side-div { width: 42px; height: 1px; background: #bdbdbd; margin-bottom: 3px; }
.side-item.big { height: 64px; }

.watermark { position: absolute; left: 1601px; top: 1097px; font-size: 19.800px; color: rgba(90,90,90,.55); white-space: nowrap; font-family: "Noto Sans CJK SC", sans-serif; }
```
